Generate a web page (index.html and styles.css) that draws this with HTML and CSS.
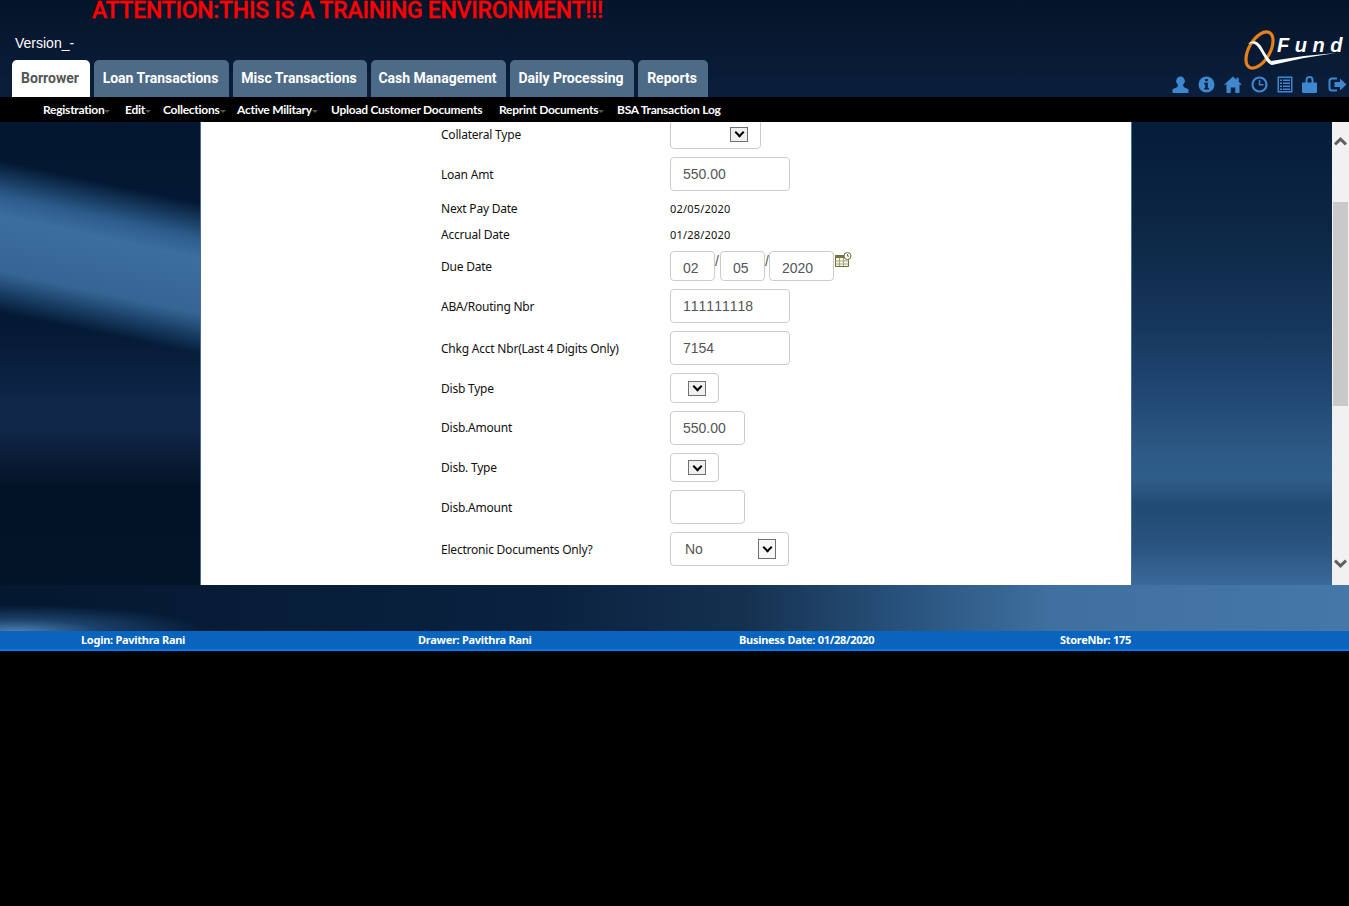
FILE: index.html
```html
<!DOCTYPE html>
<html lang="en">
<head>
<meta charset="UTF-8">
<title>QFund</title>
<link rel="stylesheet" href="styles.css">
</head>
<body>
<header class="top">
  <div class="top-left">
    <div class="attention">ATTENTION:THIS IS A TRAINING ENVIRONMENT!!!</div>
    <div class="version">Version_-</div>
    <nav class="tabs">
      <a class="tab active" style="width:78px">Borrower</a>
      <a class="tab" style="width:135px">Loan Transactions</a>
      <a class="tab" style="width:134px">Misc Transactions</a>
      <a class="tab" style="width:135px">Cash Management</a>
      <a class="tab" style="width:124px">Daily Processing</a>
      <a class="tab" style="width:70px">Reports</a>
    </nav>
  </div>
  <div class="top-right">
    <svg class="logo" width="105" height="42" viewBox="0 0 105 42">
      <ellipse cx="15.500" cy="21" rx="10.500" ry="20" transform="rotate(30 15.500 21)" fill="none" stroke="#e5801a" stroke-width="3.200"/>
      <path d="M4 15C8 11 13 11 17 17C20 22 23 28 27 32L60 27L92 24L60 29L28 36C23 35 20 27 16 21C13 16 9 13 4 15Z" fill="#fff"/>
      <text class="logo-text" x="33" y="23">Fund</text>
    </svg>
    <div class="icons">
      <svg width="17" height="17" viewBox="0 0 17 17"><circle cx="8.500" cy="5" r="4.400"/><path d="M6 8h5l.6 3 4.900 2.200V17H.5v-3.800L5.400 11z"/></svg>
      <svg width="17" height="17" viewBox="0 0 17 17"><path fill-rule="evenodd" d="M8.500.500a8 8 0 1 1 0 16 8 8 0 0 1 0-16zM7.200 3v2.300h2.600V3zM6.200 6.800v1.500h1V12h-1v1.500h4.600V12h-1V6.800z"/></svg>
      <svg width="18" height="17" viewBox="0 0 18 17"><path d="M9 .5l3.500 3.200V1.800h2.300v4L18 8.800h-2.500V17h-4.300v-5.500H6.800V17H2.500V8.800H0z"/></svg>
      <svg width="17" height="17" viewBox="0 0 17 17"><circle cx="8.500" cy="8.500" r="7" fill="none" stroke="#3f87cf" stroke-width="2.200"/><path d="M7.800 4h1.500v4h3.200v1.500H7.800z"/></svg>
      <svg width="16" height="17" viewBox="0 0 16 17"><path fill-rule="evenodd" d="M.5.500h15v16H.5zM2 2v13h12V2zM3 3.500h2v1.500H3zM6 3.500h7v1.500H6zM3 6.500h2V8H3zM6 6.500h7V8H6zM3 9.500h2V11H3zM6 9.500h7V11H6zM3 12.500h2V14H3zM6 12.500h7V14H6z"/></svg>
      <svg width="15" height="17" viewBox="0 0 15 17"><path fill-rule="evenodd" d="M3.500 6.500V4a4 4 0 0 1 8 0v2.500H14a1 1 0 0 1 1 1V16a1 1 0 0 1-1 1H1a1 1 0 0 1-1-1V7.500a1 1 0 0 1 1-1zM5.500 6.500h4V4a2 2 0 0 0-4 0z"/></svg>
      <svg class="last" width="19" height="17" viewBox="0 0 19 17"><path d="M9 1.500H4A3.500 3.500 0 0 0 .5 5v7A3.500 3.500 0 0 0 4 15.500h5v-2H4A1.500 1.500 0 0 1 2.500 12V5A1.500 1.500 0 0 1 4 3.500h5z"/><path d="M12 2.500l6.500 6-6.500 6v-3.500H6.500V6H12z"/></svg>
    </div>
  </div>
</header>

<nav class="subnav">
  <a style="width:82px">Registration<i></i></a>
  <a style="width:38px">Edit<i></i></a>
  <a style="width:74px">Collections<i></i></a>
  <a style="width:94px">Active Military<i></i></a>
  <a style="width:168px">Upload Customer Documents</a>
  <a style="width:118px">Reprint Documents<i></i></a>
  <a>BSA Transaction Log</a>
</nav>

<main class="main">
  <div class="upper">
    <div class="side-left"></div>
    <section class="panel">
      <div class="form">
        <div class="row h30"><label>Collateral Type</label><div class="pick w91"><span class="arrow"></span></div></div>
        <div class="row h34"><label>Loan Amt</label><input class="w120" value="550.00"></div>
        <div class="row h18"><label>Next Pay Date</label><span class="val">02/05/2020</span></div>
        <div class="row h18"><label>Accrual Date</label><span class="val">01/28/2020</span></div>
        <div class="row h30"><label>Due Date</label>
          <div class="date">
            <input class="d1" value="02"><span class="sl">/</span><input class="d1" value="05"><span class="sl">/</span><input class="d2" value="2020">
            <svg class="cal" width="17" height="16" viewBox="0 0 17 16">
              <path d="M.5 3.500h13v11H.5z" fill="#f7f6ea" stroke="#6a6a32"/>
              <path d="M.5 3.500h13V6H.5z" fill="#77773a"/>
              <path d="M4.500 6v8M8.500 6v8M.5 9h13M.5 12h13" stroke="#a5a57a" fill="none"/>
              <circle cx="12.500" cy="4" r="3.500" fill="#fff" stroke="#6a6a32"/>
              <path d="M12.500 2v2.200h1.500" stroke="#444" fill="none" stroke-width=".8"/>
            </svg>
          </div>
        </div>
        <div class="row h34"><label>ABA/Routing Nbr</label><input class="w120" value="111111118"></div>
        <div class="row h34"><label>Chkg Acct Nbr(Last 4 Digits Only)</label><input class="w120" value="7154"></div>
        <div class="row h30"><label>Disb Type</label><div class="pick w49"><span class="arrow"></span></div></div>
        <div class="row h34"><label class="up">Disb.Amount</label><input class="w75" value="550.00"></div>
        <div class="row h29"><label>Disb. Type</label><div class="pick w49"><span class="arrow"></span></div></div>
        <div class="row h34"><label>Disb.Amount</label><input class="w75" value=""></div>
        <div class="row h34"><label>Electronic Documents Only?</label><div class="pick w119"><span class="pick-text">No</span><span class="arrow tall"></span></div></div>
      </div>
    </section>
    <div class="side-right"></div>
    <div class="scrollbar">
      <svg class="sb-up" width="13" height="9" viewBox="0 0 13 9"><path d="M6.500 0L13 6.200 11 8.500 6.500 4.200 2 8.500 0 6.200z" fill="#606060"/></svg>
      <div class="thumb"></div>
      <svg class="sb-down" width="13" height="9" viewBox="0 0 13 9"><path d="M6.500 9L13 2.800 11 .5 6.500 4.800 2 .5 0 2.800z" fill="#606060"/></svg>
    </div>
  </div>
  <div class="lower"></div>
</main>

<footer class="status">
  <span style="width:337px">Login: Pavithra Rani</span>
  <span style="width:321px">Drawer: Pavithra Rani</span>
  <span style="width:321px">Business Date: 01/28/2020</span>
  <span>StoreNbr: 175</span>
</footer>
</body>
</html>
```

FILE: styles.css
```css
html,body{margin:0;padding:0;background:#000;height:100%;overflow:hidden;}
body{font-family:"Noto Sans",sans-serif;font-size:12px;}

.top{height:97px;display:flex;justify-content:space-between;overflow:hidden;background:linear-gradient(180deg,#041429 0,#081a33 55%,#0a1e3c 100%);}
.attention{color:#f00;font:500 23px/22px Roboto,sans-serif;letter-spacing:-.27px;padding-left:92px;height:22px;-webkit-text-stroke:.3px #f00;}
.version{color:#fff;font:14px/18px "Liberation Sans",sans-serif;padding-left:15px;margin-top:12px;}
.tabs{display:flex;gap:4px;margin:8px 0 0 12px;}
.tab{box-sizing:border-box;height:37px;padding-right:2px;text-align:center;background:#4d6b86;color:#fff;border-radius:5px 5px 0 0;font:bold 14px/36px Roboto,sans-serif;}
.tab.active{background:#fff;color:#555;}

.top-right{width:180px;display:flex;flex-direction:column;align-items:flex-end;}
.logo{margin:29px 0 0;display:block;}
.logo-text{fill:#fff;font:italic bold 20px "Liberation Sans",sans-serif;letter-spacing:5.5px;}
.icons{display:flex;gap:9px;margin:5px 2px 0 0;align-items:center;}
.icons svg{fill:#3f87cf;display:block;}
.icons .last{margin-left:2px;}

.subnav{height:25px;background:#000;display:flex;padding-left:43px;align-items:center;}
.subnav a{color:#fff;font:700 12px/25px Lato,sans-serif;letter-spacing:-.25px;white-space:nowrap;}
.subnav i{display:inline-block;border:3px solid transparent;border-top-color:#555;border-bottom:0;margin-left:0;vertical-align:1px;}

.main{height:509px;display:flex;flex-direction:column;}
.upper{height:463px;display:flex;}
.side-left{width:200px;background:
  linear-gradient(192deg,transparent 16%,#2c5c8c 23%,#3c6e9f 27%,#356594 38%,#1a3f66 42%,transparent 46%),
  linear-gradient(180deg,#031731 0,#041a35 46%,#10264a 60%,#11274a 66%,#021226 79%,#021428 100%);}
.panel{width:930px;background:#fff;border-left:1px solid #4a7099;border-right:1px solid #4a7099;overflow:hidden;}
.side-right{flex:1;background:linear-gradient(180deg,#051c3a 0,#0b2542 20%,#15355a 42%,#1f4570 57%,#2d5a86 72%,#2f5e8a 77%,#224a72 83%,#2a5580 92%,#3a6a9c 100%);}
.scrollbar{width:17px;background:#f1f1f1;display:flex;flex-direction:column;align-items:center;}
.sb-up{margin-top:15px;display:block;}
.thumb{width:15px;height:204px;background:#c9c9c9;margin-top:56px;}
.sb-down{margin-top:153px;display:block;}
.lower{height:46px;background:
  radial-gradient(ellipse 190px 26px at 15px 100%,#4a7db0 0,rgba(42,90,140,.6) 45%,rgba(42,90,140,0) 100%),
  linear-gradient(90deg,#041830 0,#0a2240 40%,#15304f 55%,#2a5580 68%,#40709f 78%,#4577a9 100%);}

.form{padding-left:240px;margin-top:-3px;display:flex;flex-direction:column;gap:8px;}
.row{display:grid;grid-template-columns:229px auto;align-items:center;justify-content:start;}
.row label{color:#111;font-size:12px;letter-spacing:-.22px;}
.row label.up{padding-bottom:2px;}
.h18{height:18px;}
.h29{height:29px;}
.h30{height:30px;}
.h34{height:34px;}
.val{color:#111;font-size:11px;letter-spacing:.2px;}

input,.pick{box-sizing:border-box;border:1px solid #ccc;border-radius:4px;background:#fff;}
input{height:100%;padding:0 12px;font:14px "Liberation Sans",sans-serif;font-kerning:none;color:#555;outline:0;}
.w120{width:120px;}
.w75{width:75px;}
.pick{height:100%;display:flex;align-items:center;justify-content:flex-end;}
.w91{width:91px;padding-right:12px;}
.w49{width:49px;padding-right:12px;}
.w119{width:119px;padding-right:12px;justify-content:space-between;padding-left:14px;}
.pick-text{font:14px "Liberation Sans",sans-serif;color:#555;}
.arrow{width:18px;height:15px;box-sizing:border-box;border:1px solid #707070;background:#f0f0f0;display:flex;align-items:center;justify-content:center;}
.arrow.tall{height:20px;background:#f8f8f8;}
.arrow::after{content:"";width:5px;height:5px;border:solid #000;border-width:0 2px 2px 0;transform:rotate(45deg);margin-top:-3px;}

.date{display:flex;height:100%;align-items:flex-start;}
.date input{padding:3px 12px 0;}
.d1{width:45px;}
.d2{width:65px;}
.sl{width:5px;font:14px/20px "Liberation Sans",sans-serif;color:#555;}
.date .sl+input.d2{margin-left:-1px;}
.cal{display:block;margin:1px 0 0 1px;}

.status{height:18px;background:#0864bd;border-bottom:2px solid #0a7cf0;display:flex;padding-left:81px;}
.status span{color:#fff;font:700 11px/18px "Noto Sans",sans-serif;letter-spacing:-.28px;white-space:nowrap;}
```
